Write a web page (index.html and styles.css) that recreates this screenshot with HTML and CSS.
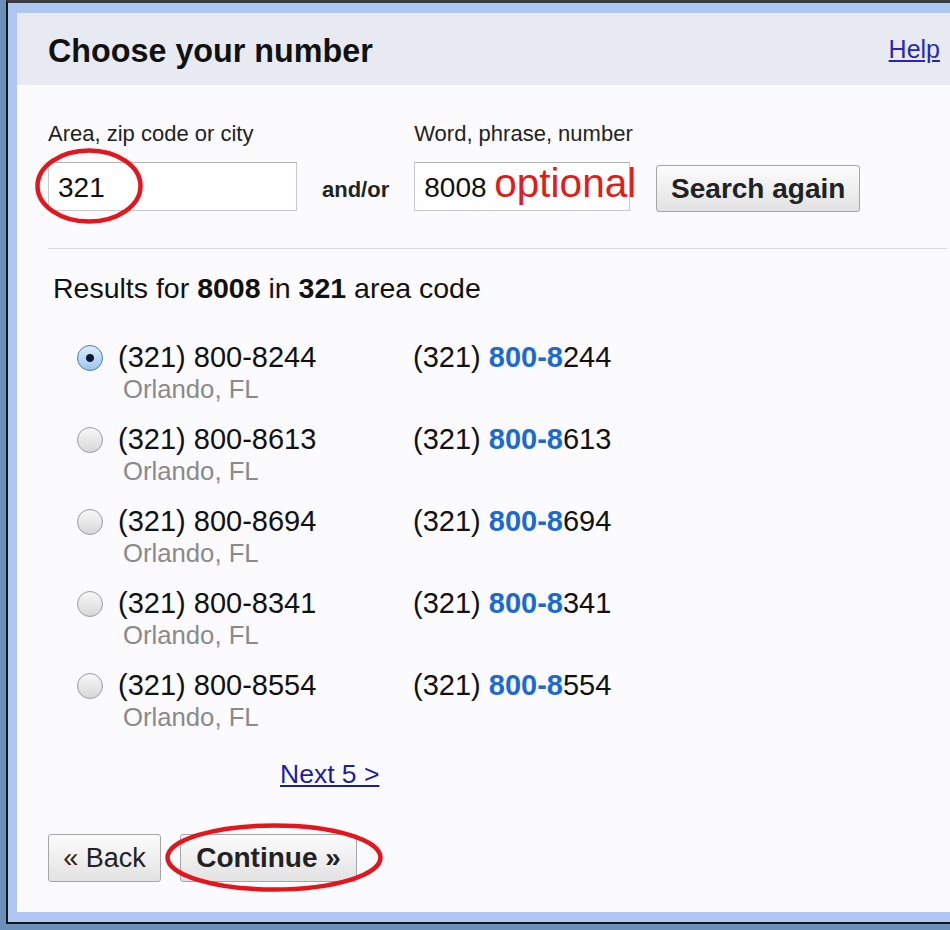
FILE: index.html
```html
<!DOCTYPE html>
<html lang="en">
<head>
<meta charset="utf-8">
<title>Choose your number</title>
<link rel="stylesheet" href="styles.css">
</head>
<body>
<div class="screen">
  <div class="frame">
    <div class="dialog">
      <div class="header">
        <h1 class="title">Choose your number</h1>
        <a class="help" href="#">Help</a>
      </div>
      <div class="content">
        <div class="search">
          <div class="field field-area">
            <div class="label">Area, zip code or city</div>
            <div class="input">321</div>
            <svg class="ring ring-area" viewBox="0 0 108 76" aria-hidden="true"><ellipse cx="54" cy="38" rx="51.5" ry="35.5"/></svg>
          </div>
          <div class="andor">and/or</div>
          <div class="field field-word">
            <div class="label">Word, phrase, number</div>
            <div class="input">8008 <span class="note">optional</span></div>
          </div>
          <button class="btn btn-search" type="button">Search again</button>
        </div>
        <hr class="divider">
        <p class="results">Results for <b>8008</b> in <b>321</b> area code</p>
        <ul class="list">
          <li class="row"><span class="radio checked"></span><div class="main"><div class="num">(321) 800-8244</div><div class="city">Orlando, FL</div></div><div class="alt">(321) <b>800-8</b>244</div></li>
          <li class="row"><span class="radio"></span><div class="main"><div class="num">(321) 800-8613</div><div class="city">Orlando, FL</div></div><div class="alt">(321) <b>800-8</b>613</div></li>
          <li class="row"><span class="radio"></span><div class="main"><div class="num">(321) 800-8694</div><div class="city">Orlando, FL</div></div><div class="alt">(321) <b>800-8</b>694</div></li>
          <li class="row"><span class="radio"></span><div class="main"><div class="num">(321) 800-8341</div><div class="city">Orlando, FL</div></div><div class="alt">(321) <b>800-8</b>341</div></li>
          <li class="row"><span class="radio"></span><div class="main"><div class="num">(321) 800-8554</div><div class="city">Orlando, FL</div></div><div class="alt">(321) <b>800-8</b>554</div></li>
        </ul>
        <div class="pager"><a class="next" href="#">Next 5 &gt;</a></div>
        <div class="actions">
          <button class="btn btn-back" type="button">&laquo; Back</button>
          <span class="cont-wrap">
            <button class="btn btn-continue" type="button">Continue &raquo;</button>
            <svg class="ring ring-cont" viewBox="0 0 218 69" aria-hidden="true"><ellipse cx="109" cy="34.5" rx="106.5" ry="32"/></svg>
          </span>
        </div>
      </div>
    </div>
  </div>
</div>
</body>
</html>
```
FILE: styles.css
```css
html, body {
  margin: 0;
  padding: 0;
}
body {
  background: #6b91ba;
  font-family: "Liberation Sans", Arial, sans-serif;
  height: 930px;
  overflow: hidden;
}
.screen {
  padding-left: 6px;
}
.frame {
  border-left: 2px solid #141618;
  border-bottom: 2px solid #141618;
  border-top: 3px solid #3a3e44;
  background: #b1c7f3;
  padding: 10px 0 10px 9px;
}
.dialog {
  background: #fbfbfd;
}
.header {
  display: flex;
  justify-content: space-between;
  align-items: flex-start;
  height: 72px;
  box-sizing: border-box;
  padding: 0 10px 0 31px;
  background: #e8eaf2;
}
.title {
  margin: 20px 0 0;
  font-size: 32.3px;
  line-height: 36px;
  font-weight: bold;
  color: #111;
}
.help {
  margin-top: 22px;
  font-size: 25px;
  line-height: 28px;
  color: #2828b4;
  text-decoration: underline;
}
.content {
  padding: 36px 3px 30px 31px;
}
.search {
  display: flex;
  align-items: flex-start;
}
.field {
  position: relative;
}
.field-area {
  width: 249px;
}
.field-word {
  width: 216px;
}
.label {
  font-size: 22px;
  line-height: 26px;
  color: #222;
  margin-bottom: 15px;
  white-space: nowrap;
}
.input {
  height: 49px;
  box-sizing: border-box;
  border: 1px solid #c8c8c8;
  border-top-color: #b4b4b4;
  background: #fff;
  font-size: 28px;
  line-height: 49px;
  padding-left: 9px;
  color: #111;
  white-space: nowrap;
}
.note {
  color: #e31b1b;
  font-size: 40.5px;
  line-height: 30px;
}
.andor {
  margin: 56px 25px 0;
  font-size: 22px;
  line-height: 26px;
  font-weight: bold;
  color: #222;
}
.btn {
  font-family: "Liberation Sans", Arial, sans-serif;
  color: #222;
  border: 1px solid #a6a6a6;
  border-radius: 3px;
  background: linear-gradient(#fcfcfc, #e2e2e2);
  padding: 0;
  cursor: pointer;
}
.btn-search {
  margin: 44px 0 0 26px;
  width: 204px;
  height: 47px;
  font-size: 28px;
  font-weight: bold;
}
.divider {
  margin: 36px 0 0;
  border: 0;
  border-top: 1px solid #dadada;
  height: 0;
}
.results {
  margin: 23px 0 0 5px;
  font-size: 28.5px;
  line-height: 32px;
  color: #111;
}
.list {
  list-style: none;
  margin: 37px 0 0;
  padding: 0 0 0 29px;
  display: flex;
  flex-direction: column;
  gap: 18px;
}
.row {
  display: flex;
  align-items: flex-start;
}
.radio {
  flex: none;
  width: 26px;
  height: 26px;
  margin-top: 4px;
  box-sizing: border-box;
  border-radius: 50%;
  border: 1px solid #9c9c9c;
  background: linear-gradient(#f7f7f7, #d8d8d8);
}
.radio.checked {
  border-color: #4b7bb2;
  background: radial-gradient(circle, #0f1b33 0 3.5px, transparent 4.5px), linear-gradient(#dcedfd, #9ec6ee);
}
.main {
  width: 295px;
  margin-left: 15px;
}
.num,
.alt {
  font-size: 29px;
  line-height: 33px;
  color: #111;
  white-space: nowrap;
}
.alt b {
  color: #1c6ad0;
}
.city {
  font-size: 25.7px;
  line-height: 31px;
  color: #8a8a8a;
  padding-left: 5px;
}
.pager {
  margin-top: 26px;
  padding-left: 232px;
  font-size: 26.5px;
  line-height: 30px;
}
.next {
  color: #1c1ca8;
  text-decoration: underline;
}
.actions {
  display: flex;
  gap: 19px;
  margin-top: 45px;
}
.btn-back {
  width: 113px;
  height: 48px;
  font-size: 27px;
}
.cont-wrap {
  position: relative;
  display: flex;
}
.btn-continue {
  width: 177px;
  height: 48px;
  font-size: 28px;
  font-weight: bold;
}
.ring {
  position: absolute;
  fill: none;
  stroke: #e3161d;
  stroke-width: 4.5;
  pointer-events: none;
}
.ring-area {
  left: -13px;
  top: 27px;
  width: 108px;
  height: 76px;
}
.ring-cont {
  left: -15px;
  top: -11px;
  width: 218px;
  height: 69px;
}
```
